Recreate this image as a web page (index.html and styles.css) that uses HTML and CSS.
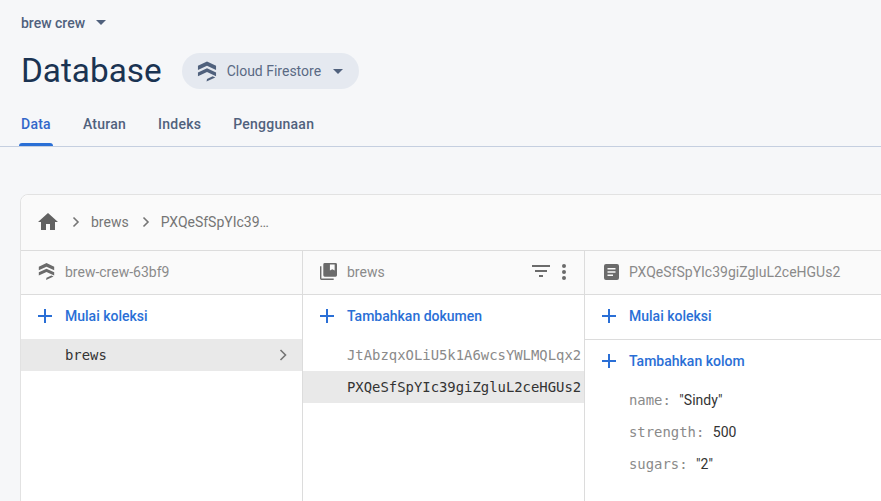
FILE: index.html
```html
<!DOCTYPE html>
<html lang="id">
<head>
<meta charset="utf-8">
<title>Database</title>
<link rel="stylesheet" href="styles.css">
</head>
<body>
<header class="head">
  <div class="project">
    <span class="project-name">brew crew</span>
    <svg class="caret" width="10" height="5" viewBox="0 0 10 5"><path d="M0 0h10L5 5z"/></svg>
  </div>
  <div class="title-row">
    <h1 class="title">Database</h1>
    <div class="product">
      <svg class="stack" width="20" height="21" viewBox="0 0 21 21"><path d="M10.5 0L20 4.500V9L10.500 4.500 1 9V4.500z"/><path d="M10.500 7L20 11.500V15.500L10.500 11 1 15.500V11.500z"/><path d="M16.500 15.500L10.500 18.300 10 21 19.200 16.800z"/></svg>
      <span class="product-name">Cloud Firestore</span>
      <svg class="caret" width="10" height="5" viewBox="0 0 10 5"><path d="M0 0h10L5 5z"/></svg>
    </div>
  </div>
  <nav class="tabs">
    <a class="tab active">Data</a>
    <a class="tab">Aturan</a>
    <a class="tab">Indeks</a>
    <a class="tab">Penggunaan</a>
  </nav>
</header>
<main class="card">
  <div class="crumbs">
    <svg class="home" width="20" height="17" viewBox="0 0 20 17"><path d="M8 17V11h4v6h5V9h3L10 0 0 9h3v8z"/></svg>
    <svg class="chev first" width="8" height="12" viewBox="0 0 8 12"><path d="M1.500 1.500L6 6l-4.500 4.500"/></svg>
    <span>brews</span>
    <svg class="chev" width="8" height="12" viewBox="0 0 8 12"><path d="M1.500 1.500L6 6l-4.500 4.500"/></svg>
    <span>PXQeSfSpYIc39…</span>
  </div>
  <div class="cols">
    <section class="col col-a">
      <div class="col-head">
        <svg class="stack-sm" width="17" height="17" viewBox="0 0 21 21"><path d="M10.500 0L20 4.500V9L10.500 4.500 1 9V4.500z"/><path d="M10.500 7L20 11.500V15.500L10.500 11 1 15.500V11.500z"/><path d="M16.500 15.500L10.500 18.300 10 21 19.200 16.800z"/></svg>
        <span class="head-label">brew-crew-63bf9</span>
      </div>
      <div class="add">
        <svg class="plus" width="14" height="14" viewBox="0 0 14 14"><path d="M6 0h2v6h6v2H8v6H6V8H0V6h6z"/></svg>
        <span>Mulai koleksi</span>
      </div>
      <div class="row selected">
        <span class="mono">brews</span>
        <svg class="chev row-chev" width="8" height="12" viewBox="0 0 8 12"><path d="M1.500 1L6.500 6l-5 5"/></svg>
      </div>
    </section>
    <section class="col col-b">
      <div class="col-head">
        <svg class="coll" width="17" height="17" viewBox="0 0 18 18"><path d="M5 0h11.500A1.500 1.500 0 0 1 18 1.500V13a1.500 1.500 0 0 1-1.500 1.500H5A1.500 1.500 0 0 1 3.500 13V1.500A1.500 1.500 0 0 1 5 0zM10.500 1.500V8l2.500-1.500L15.500 8V1.500z" fill-rule="evenodd"/><path d="M0 3.500h1.500V16.500H14.500V18H1.500A1.500 1.500 0 0 1 0 16.500z"/></svg>
        <span class="head-label">brews</span>
        <span class="head-tools">
          <svg class="filter" width="18" height="12" viewBox="0 0 18 12"><path d="M0 0h18v2H0zM3 5h12v2H3zM7 10h4v2H7z"/></svg>
          <svg class="dots" width="4" height="16" viewBox="0 0 4 16"><circle cx="2" cy="2" r="2"/><circle cx="2" cy="8" r="2"/><circle cx="2" cy="14" r="2"/></svg>
        </span>
      </div>
      <div class="add">
        <svg class="plus" width="14" height="14" viewBox="0 0 14 14"><path d="M6 0h2v6h6v2H8v6H6V8H0V6h6z"/></svg>
        <span>Tambahkan dokumen</span>
      </div>
      <div class="row"><span class="mono muted">JtAbzqxOLiU5k1A6wcsYWLMQLqx2</span></div>
      <div class="row selected"><span class="mono">PXQeSfSpYIc39giZgluL2ceHGUs2</span></div>
    </section>
    <section class="col col-c">
      <div class="col-head">
        <svg class="doc" width="15" height="16" viewBox="0 0 15 16"><path fill-rule="evenodd" d="M2 0h11a2 2 0 0 1 2 2v12a2 2 0 0 1-2 2H2a2 2 0 0 1-2-2V2a2 2 0 0 1 2-2zM3.500 4v1.500h8V4zM3.500 7.200v1.500h8V7.200zM3.500 10.400v1.500h5.500v-1.500z"/></svg>
        <span class="head-label">PXQeSfSpYIc39giZgluL2ceHGUs2</span>
      </div>
      <div class="add add-line">
        <svg class="plus" width="14" height="14" viewBox="0 0 14 14"><path d="M6 0h2v6h6v2H8v6H6V8H0V6h6z"/></svg>
        <span>Mulai koleksi</span>
      </div>
      <div class="add">
        <svg class="plus" width="14" height="14" viewBox="0 0 14 14"><path d="M6 0h2v6h6v2H8v6H6V8H0V6h6z"/></svg>
        <span>Tambahkan kolom</span>
      </div>
      <dl class="fields">
        <div class="field"><dt class="mono muted">name:</dt><dd>"Sindy"</dd></div>
        <div class="field"><dt class="mono muted">strength:</dt><dd>500</dd></div>
        <div class="field"><dt class="mono muted">sugars:</dt><dd>"2"</dd></div>
      </dl>
    </section>
  </div>
</main>
</body>
</html>
```
FILE: styles.css
```css
html, body { margin: 0; height: 100%; overflow: hidden; }
body { background: #f6f7f9; font-family: Roboto, sans-serif; color: #333; width: 881px; height: 501px; }
svg { display: block; flex: none; }
.head { padding: 0 0 0 21px; border-bottom: 1px solid #c5cfe0; height: 146px; margin-bottom: 47px; }
.project { display: flex; align-items: center; gap: 11px; height: 15px; padding-top: 15px; }
.project-name { font-size: 14px; font-weight: 500; color: #50617d; }
.caret path { fill: #50617d; }
.title-row { display: flex; align-items: center; height: 36px; margin-top: 23px; }
.title { margin: 0; font-size: 33.300px; font-weight: 400; color: #1a3352; line-height: 36px; }
.product { display: flex; align-items: center; height: 36px; margin-left: 20px; padding: 0 16px 0 15px; border-radius: 18px; background: #e5e9f0; }
.stack path { fill: #50617d; }
.product-name { font-size: 14px; color: #5a6a84; margin: 0 12px 0 10px; }
.tabs { display: flex; gap: 32px; margin-top: 26px; }
.tab { font-size: 14px; font-weight: 500; color: #50617d; height: 31px; line-height: 18px; letter-spacing: 0.250px; }
.tab.active { color: #3367c9; position: relative; }
.tab.active::after { content: ""; position: absolute; left: -2px; right: -2px; bottom: 0; height: 3px; background: #2a6fd6; border-radius: 3px 3px 0 0; }
.card { margin-left: 20px; width: 880px; height: 320px; background: #fff; border: 1px solid #e2e2e2; border-radius: 8px 0 0 0; }
.crumbs { display: flex; align-items: center; height: 53px; padding: 0 0 2px 17px; background: #fafafa; border-bottom: 1px solid #dcdcdc; border-radius: 8px 0 0 0; font-size: 14px; color: #757575; }
.home path { fill: #616161; }
.chev path { fill: none; stroke: #757575; stroke-width: 1.600; }
.crumbs .chev { margin: 1px 11px 0 13px; }
.crumbs .chev.first { margin-left: 14px; }
.cols { display: flex; height: 260px; }
.col { flex: none; border-right: 1px solid #dcdcdc; box-sizing: border-box; }
.col-a { width: 282px; }
.col-b { width: 282px; }
.col-c { flex: 1; border-right: 0; }
.col-head { display: flex; align-items: center; height: 41px; padding-bottom: 2px; border-bottom: 1px solid #dcdcdc; background: #fafafa; font-size: 14px; color: #8a8a8a; }
.col-a .col-head { padding-left: 17px; gap: 10px; }
.col-b .col-head { padding-left: 17px; gap: 10px; }
.col-c .col-head { padding-left: 19px; gap: 10px; }
.stack-sm path, .coll path, .doc path, .filter path, .dots circle { fill: #6b6b6b; }
.head-tools { display: flex; align-items: center; gap: 12px; margin-left: auto; margin-right: 18px; }
.filter { margin-bottom: 2px; }
.add { display: flex; align-items: center; gap: 13px; padding: 0 0 2px 17px; height: 42px; font-size: 14px; font-weight: 500; color: #2a6fd6; }
.add-line { border-bottom: 1px solid #dcdcdc; }
.plus path { fill: #2a6fd6; }
.row { display: flex; align-items: center; justify-content: space-between; height: 32px; padding-left: 44px; }
.selected { background: #e9e9e9; }
.mono { font-family: "DejaVu Sans Mono", monospace; font-size: 13.900px; color: #333; }
.muted { color: #8a8a8a; }
.row-chev { margin-right: 15px; }
.fields { margin: 0; padding: 0 0 0 44px; }
.field { display: flex; align-items: center; gap: 8.500px; height: 32px; }
.field dt { margin: 0; }
.field dd { margin: 0; font-size: 14px; color: #333; }
```
